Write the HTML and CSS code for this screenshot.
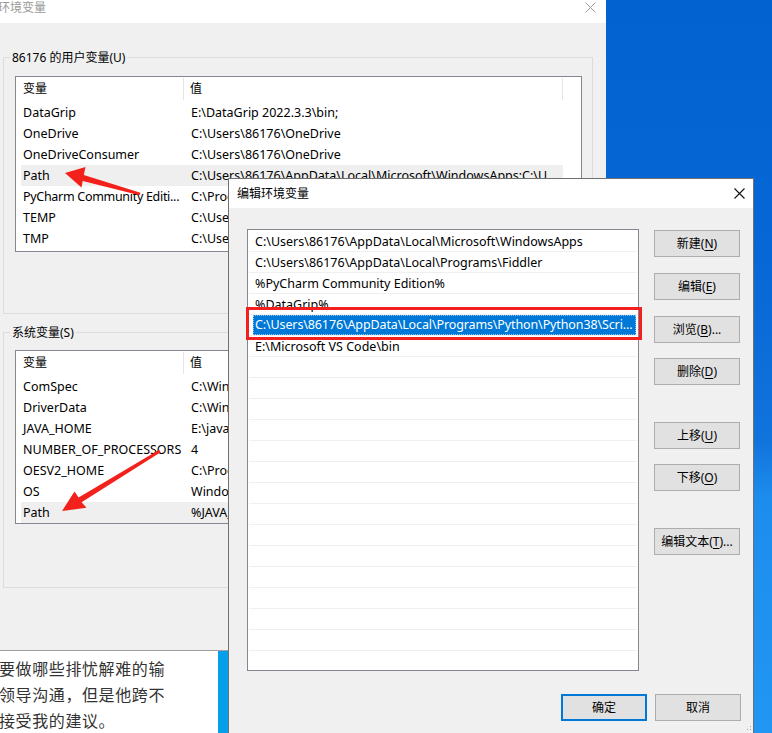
FILE: index.html
```html
<!DOCTYPE html>
<html>
<head>
<meta charset="utf-8">
<title>环境变量</title>
<link rel="stylesheet" href="styles.css">
</head>
<body>
<div class="desktop">

  <div class="win env">
    <div class="titlebar">
      <span class="title">环境变量</span>
      <svg class="close-x inactive" width="11" height="11" viewBox="0 0 11 11"><path d="M0.5 0.5 L10.5 10.5 M10.5 0.5 L0.5 10.5" stroke="#9a9a9a" stroke-width="1" fill="none"/></svg>
    </div>
    <div class="env-body">
      <div class="group user-group">
        <div class="group-label">86176 的用户变量(U)</div>
        <div class="listview user-list">
          <div class="lv-head"><div class="hc1">变量</div><div class="hc2">值</div><div class="hc3"></div></div>
          <div class="lv-row"><div class="c1">DataGrip</div><div class="c2">E:\DataGrip 2022.3.3\bin;</div></div>
          <div class="lv-row"><div class="c1">OneDrive</div><div class="c2">C:\Users\86176\OneDrive</div></div>
          <div class="lv-row"><div class="c1">OneDriveConsumer</div><div class="c2">C:\Users\86176\OneDrive</div></div>
          <div class="lv-row sel"><div class="c1">Path</div><div class="c2">C:\Users\86176\AppData\Local\Microsoft\WindowsApps;C:\U</div></div>
          <div class="lv-row"><div class="c1 tight">PyCharm Community Editi...</div><div class="c2">C:\Program Files\JetBrains\PyCharm Community Edition 2022.1\bin;</div></div>
          <div class="lv-row"><div class="c1">TEMP</div><div class="c2">C:\Users\86176\AppData\Local\Temp</div></div>
          <div class="lv-row"><div class="c1">TMP</div><div class="c2">C:\Users\86176\AppData\Local\Temp</div></div>
        </div>
      </div>
      <div class="group sys-group">
        <div class="group-label">系统变量(S)</div>
        <div class="listview sys-list">
          <div class="lv-head"><div class="hc1">变量</div><div class="hc2">值</div><div class="hc3"></div></div>
          <div class="lv-row"><div class="c1">ComSpec</div><div class="c2">C:\Windows\system32\cmd.exe</div></div>
          <div class="lv-row"><div class="c1">DriverData</div><div class="c2">C:\Windows\System32\Drivers\DriverData</div></div>
          <div class="lv-row"><div class="c1">JAVA_HOME</div><div class="c2">E:\java\jdk1.8.0_201</div></div>
          <div class="lv-row"><div class="c1">NUMBER_OF_PROCESSORS</div><div class="c2">4</div></div>
          <div class="lv-row"><div class="c1">OESV2_HOME</div><div class="c2">C:\Program Files\OESV2</div></div>
          <div class="lv-row"><div class="c1">OS</div><div class="c2">Windows_NT</div></div>
          <div class="lv-row sel"><div class="c1">Path</div><div class="c2">%JAVA_HOME%\bin;C:\Windows\system32;C:\Windows</div></div>
        </div>
      </div>
    </div>
  </div>

  <div class="webpage">
    <div class="article">
      <p class="line">要做哪些排忧解难的输</p>
      <p class="line">领导沟通，但是他跨不</p>
      <p class="line">接受我的建议。</p>
    </div>
    <div class="sidebar-bar"></div>
  </div>

  <div class="win edit">
    <div class="titlebar edit-title">
      <span class="title">编辑环境变量</span>
      <svg class="close-x" width="11" height="11" viewBox="0 0 11 11"><path d="M0.5 0.5 L10.5 10.5 M10.5 0.5 L0.5 10.5" stroke="#111" stroke-width="1.1" fill="none"/></svg>
    </div>
    <div class="edit-body">
      <div class="edit-main">
        <div class="pathlist">
          <div class="pl-row">C:\Users\86176\AppData\Local\Microsoft\WindowsApps</div>
          <div class="pl-row">C:\Users\86176\AppData\Local\Programs\Fiddler</div>
          <div class="pl-row">%PyCharm Community Edition%</div>
          <div class="pl-row">%DataGrip%</div>
          <div class="pl-row sel-row"><div class="pl-sel">C:\Users\86176\AppData\Local\Programs\Python\Python38\Scri...</div></div>
          <div class="pl-row">E:\Microsoft VS Code\bin</div>
          <div class="pl-row"></div>
          <div class="pl-row"></div>
          <div class="pl-row"></div>
          <div class="pl-row"></div>
          <div class="pl-row"></div>
          <div class="pl-row"></div>
          <div class="pl-row"></div>
          <div class="pl-row"></div>
          <div class="pl-row"></div>
          <div class="pl-row"></div>
          <div class="pl-row"></div>
          <div class="pl-row"></div>
          <div class="pl-row"></div>
          <div class="pl-row"></div>
          <div class="pl-row last"></div>
        </div>
        <div class="btncol">
          <div class="btn">新建(<u>N</u>)</div>
          <div class="btn gap16">编辑(<u>E</u>)</div>
          <div class="btn gap16">浏览(<u>B</u>)...</div>
          <div class="btn gap15">删除(<u>D</u>)</div>
          <div class="btn gap37">上移(<u>U</u>)</div>
          <div class="btn gap15">下移(<u>O</u>)</div>
          <div class="btn gap37">编辑文本(<u>T</u>)...</div>
        </div>
      </div>
      <div class="edit-footer">
        <div class="btn default">确定</div>
        <div class="btn">取消</div>
      </div>
    </div>
  </div>

  <div class="red-box"></div>

  <svg class="grip" width="6" height="6" viewBox="0 0 6 6">
    <rect x="4" y="0" width="1" height="1" fill="#a0a0a0"/>
    <rect x="1" y="3" width="1" height="1" fill="#a0a0a0"/>
    <rect x="4" y="3" width="1" height="1" fill="#a0a0a0"/>
  </svg>

  <svg class="arrows" width="772" height="733" viewBox="0 0 772 733">
    <polygon fill="#f2211c" points="65,173 85.5,167 83.8,175 140.4,192.8 139.6,195.2 82.7,181 81.5,187.5"/>
    <polygon fill="#f2211c" points="62,511 74.5,491.5 78.6,497.4 159.2,449.8 160.6,452.2 81.6,502.2 86.5,507.8"/>
  </svg>
</div>
</body>
</html>
```

FILE: styles.css
```css
* { box-sizing: border-box; }
html, body { margin: 0; padding: 0; }
body {
  width: 772px;
  height: 733px;
  overflow: hidden;
  font-family: "Noto Sans", "Noto Sans CJK SC", sans-serif;
  font-size: 12px;
  color: #000;
}
.desktop {
  position: relative;
  width: 772px;
  height: 733px;
  overflow: hidden;
  background: linear-gradient(180deg, #0262cf 0%, #0767d6 35%, #1173dc 60%, #1d8ded 68%, #2196f2 100%);
}

/* ---------- background window ---------- */
.win { position: absolute; background: #f0f0f0; }
.env {
  left: 0; top: 0;
  width: 606px; height: 651px;
  border-bottom: 1px solid #a0a0a0;
  display: flex; flex-direction: column;
}
.titlebar {
  background: #fff;
  display: flex;
  justify-content: space-between;
}
.env .titlebar { height: 23px; align-items: flex-start; }
.env .title { color: #9a9a9a; line-height: 16px; margin-left: -2px; }
.env .close-x { margin: 2px 10px 0 0; }

.env-body { padding: 34px 13px 0 3px; display: flex; flex-direction: column; }
.group { border: 1px solid #dcdcdc; }
.user-group { height: 257px; }
.sys-group { height: 256px; margin-top: 18px; }
.group-label {
  width: fit-content;
  margin: -8px 0 0 6px;
  padding: 0 2px;
  line-height: 16px;
  background: #f0f0f0;
  white-space: nowrap;
}
.listview {
  margin: 10px 0 0 11px;
  width: 567px;
  border: 1px solid #828790;
  background: #fff;
  overflow: hidden;
}
.user-list { height: 176px; }
.sys-list { margin-top: 9px; height: 174px; }
.lv-head { display: flex; height: 25px; }
.hc1 { width: 168px; padding-left: 7px; border-right: 1px solid #e5e5e5; margin: 1px 0 2px; line-height: 22px; }
.hc2 { width: 379px; padding-left: 6px; border-right: 1px solid #e5e5e5; margin: 1px 0 2px; line-height: 22px; }
.hc3 { flex: 1; }
.lv-row {
  display: flex;
  margin-left: 5px;
  width: 542px;
  height: 21px;
  line-height: 21px;
  font-size: 12.5px;
  white-space: nowrap;
}
.lv-row.sel { background: #efefef; }
.c1 { width: 163px; padding-left: 2px; overflow: hidden; }
.c1.tight { letter-spacing: -0.3px; }
.c2 { flex: 1; padding-left: 7px; overflow: hidden; }

/* ---------- web page behind ---------- */
.webpage {
  position: absolute;
  left: 0; top: 651px;
  width: 228px; height: 82px;
  display: flex;
}
.article {
  width: 218px;
  background: #fff;
  padding-top: 4px;
  overflow: hidden;
}
.line {
  margin: 0 0 0 -1px;
  font-family: "Noto Sans CJK SC", sans-serif;
  font-size: 16px;
  letter-spacing: 0.6px;
  line-height: 26px;
  color: #333;
  white-space: nowrap;
}
.sidebar-bar { width: 10px; background: #06a0ea; }

/* ---------- edit dialog ---------- */
.edit {
  left: 228px; top: 178px;
  width: 526px; height: 570px;
  border: 1px solid #707070;
  display: flex; flex-direction: column;
}
.edit-title { height: 29px; align-items: center; }
.edit-title .title { padding-left: 8px; line-height: 29px; }
.edit-title .close-x { margin-right: 8px; margin-top: -1px; }

.edit-body { padding: 21px 12px 0 18px; display: flex; flex-direction: column; }
.edit-main { display: flex; gap: 15px; }
.pathlist {
  width: 392px;
  height: 442px;
  border: 1px solid #828790;
  background: #fff;
  padding: 1px 1px 0 1px;
  overflow: hidden;
}
.pl-row {
  height: 21px;
  line-height: 21px;
  font-size: 12.5px;
  border-bottom: 1px solid #f0f0f0;
  padding-left: 6px;
  white-space: nowrap;
  overflow: hidden;
}
.pl-row.sel-row { padding-left: 4px; }
.pl-sel {
  background: #0078d7;
  color: #fff;
  height: 20px;
  line-height: 20px;
  margin-right: 1px;
  padding-left: 2px;
  letter-spacing: -0.12px;
  overflow: hidden;
  outline: 1px dotted rgba(255,255,255,0.55);
  outline-offset: -1px;
}
.btncol { width: 86px; padding-top: 1px; display: flex; flex-direction: column; }
.btn {
  width: 86px;
  height: 27px;
  line-height: 25px;
  text-align: center;
  background: #e1e1e1;
  border: 1px solid #adadad;
  white-space: nowrap;
}
.btn u { text-underline-offset: 2px; }
.gap15 { margin-top: 15px; }
.gap16 { margin-top: 16px; }
.gap37 { margin-top: 37px; }
.edit-footer { display: flex; justify-content: flex-end; gap: 8px; margin-top: 23px; }
.btn.default { border: 2px solid #0078d7; line-height: 23px; }

/* ---------- overlays ---------- */
.red-box {
  position: absolute;
  left: 246px; top: 307px;
  width: 396px; height: 33px;
  border: 3px solid #f41f1f;
}
.grip { position: absolute; left: 746px; top: 726px; }
.arrows { position: absolute; left: 0; top: 0; pointer-events: none; }
```
